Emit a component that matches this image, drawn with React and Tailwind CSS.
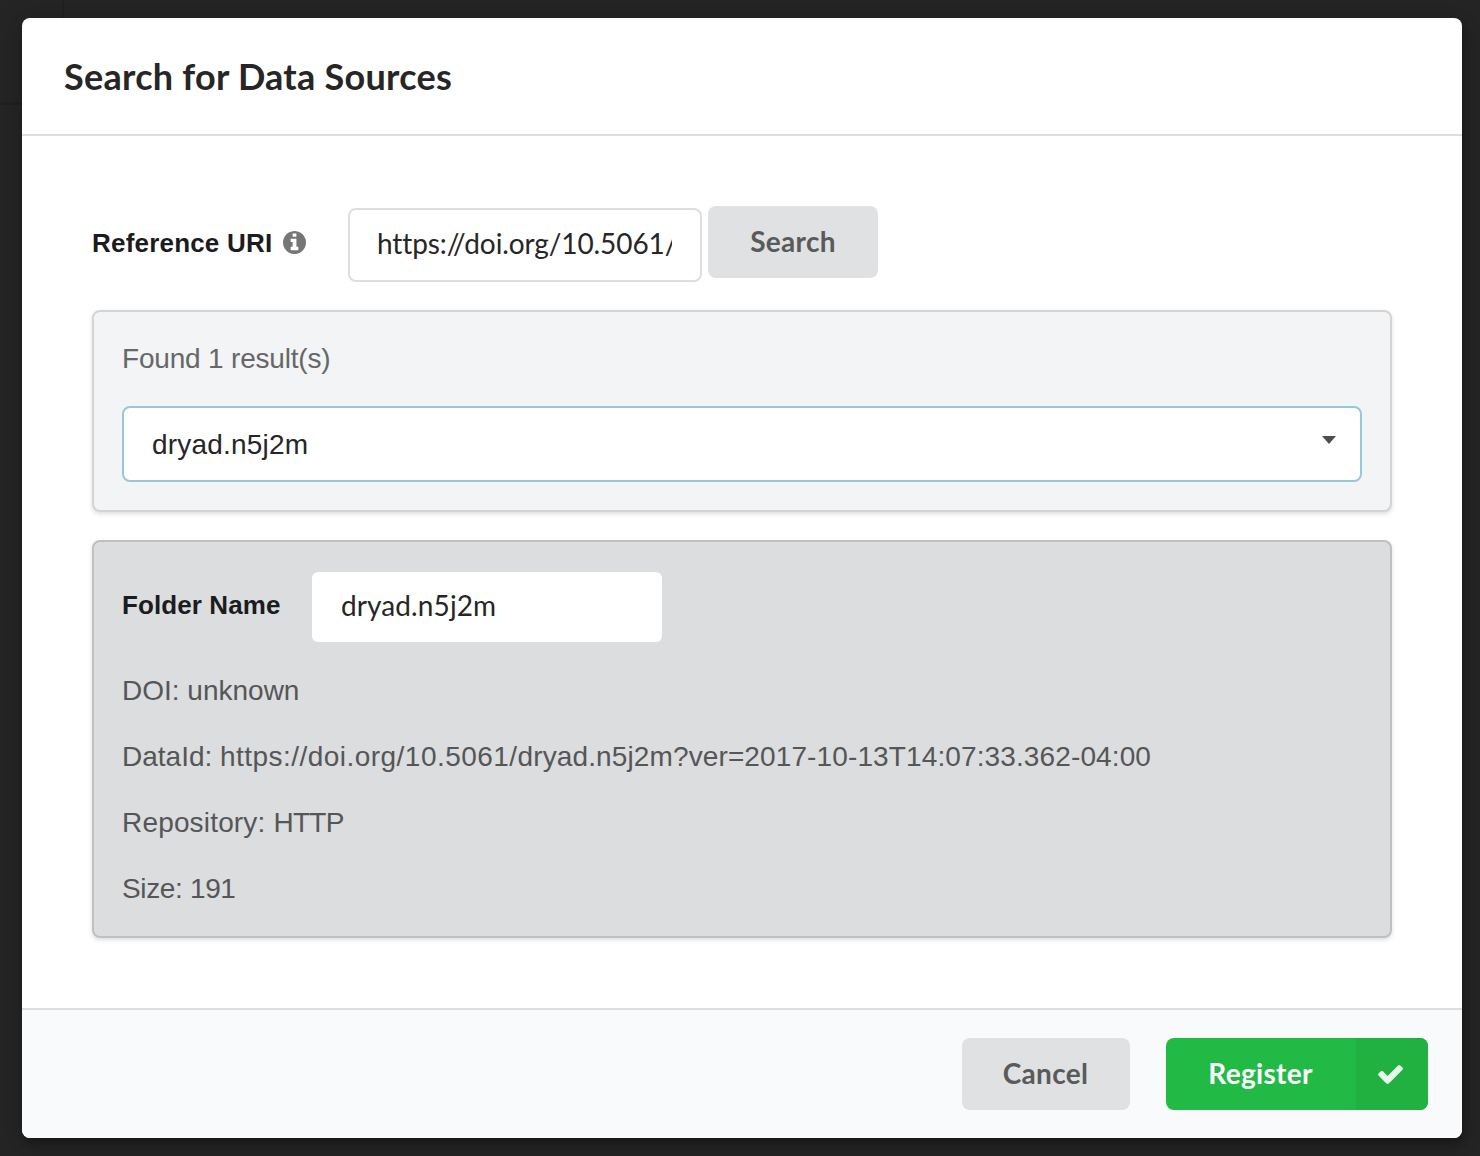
import React from "react";

const label = "font-['Liberation_Sans'] font-bold text-[26px] leading-[36px] whitespace-nowrap text-[#1b1c1d]";
const detail = "h-[66px] w-max text-[28px] leading-[36px] whitespace-nowrap";

function InfoIcon() {
  return (
    <svg className="mb-[1px] ml-[11px] h-[23px] w-[23px] shrink-0" viewBox="128 128 1536 1536" fill="#767676" aria-hidden="true">
      <path d="M1152 1376v-160q0-14-9-23t-23-9h-96v-512q0-14-9-23t-23-9h-320q-14 0-23 9t-9 23v160q0 14 9 23t23 9h96v320h-96q-14 0-23 9t-9 23v160q0 14 9 23t23 9h448q14 0 23-9t9-23zm-128-896v-160q0-14-9-23t-23-9h-192q-14 0-23 9t-9 23v160q0 14 9 23t23 9h192q14 0 23-9t9-23zm640 416q0 209-103 385.5t-279.5 279.5-385.5 103-385.5-103-279.5-279.5-103-385.5 103-385.5 279.5-279.5 385.5-103 385.5 103 279.5 279.5 103 385.5z" />
    </svg>
  );
}

function CheckIcon() {
  return (
    <svg className="mr-[3px] h-[19px] w-[25px]" viewBox="121 334 1550 1188" fill="#e9f8ec" aria-hidden="true">
      <path d="M1671 566q0 40-28 68l-724 724-136 136q-28 28-68 28t-68-28l-136-136-362-362q-28-28-28-68t28-68l136-136q28-28 68-28t68 28l294 295 656-657q28-28 68-28t68 28l136 136q28 28 28 68z" />
    </svg>
  );
}

export default function App() {
  return (
    <div className="relative h-[1156px] w-[1480px] overflow-hidden bg-[#252525] pl-[22px] pt-[18px] font-['Liberation_Sans',sans-serif] [font-variant-ligatures:none]">
      <div className="absolute left-[62px] top-0 h-[18px] w-[2px] bg-[#202020]" />
      <div className="absolute left-0 top-[102px] h-[3px] w-[22px] bg-[#202020]" />
      <div className="relative flex h-[1120px] w-[1440px] flex-col overflow-hidden rounded-[8px] bg-white shadow-[2px_6px_6px_rgba(0,0,0,0.2),2px_6px_30px_4px_rgba(0,0,0,0.2)]">
        <header className="flex h-[118px] shrink-0 items-center border-b-2 border-[#dededf] pl-[42px]">
          <h1 className="font-['Lato'] text-[36px] font-bold leading-[46px] tracking-[0.26px] text-[#262626]">Search for Data Sources</h1>
        </header>
        <main className="h-[872px] shrink-0 px-[70px] pt-[70px]">
          <div className="flex h-[104px] items-start">
            <div className="flex h-[74px] w-[256px] items-center">
              <span className={`${label} tracking-[0.2px]`}>Reference URI</span>
              <InfoIcon />
            </div>
            <div className="mt-[2px] h-[74px] w-[354px] rounded-[8px] border-2 border-[#dededf] px-[27px] pt-[15px]">
              <div className="w-[295px] overflow-hidden whitespace-nowrap font-['Lato'] text-[28px] leading-[36px] tracking-[-0.1px] text-[#262626]">https://doi.org/10.5061/</div>
            </div>
            <button className="ml-[6px] h-[72px] w-[170px] rounded-[8px] bg-[#e0e1e2] pb-[2px] font-['Lato'] text-[28px] font-bold tracking-[0.3px] text-[#5a5a5b]">Search</button>
          </div>
          <section className="h-[202px] rounded-[8px] border-2 border-[#d4d4d5] bg-[#f3f4f5] px-[28px] pt-[29px] shadow-[0_2px_4px_rgba(34,36,38,0.15)]">
            <div className="w-max text-[28px] leading-[36px] tracking-[-0.19px] text-[#666768]">Found 1 result(s)</div>
            <div className="mt-[29px] flex h-[76px] items-center justify-between rounded-[8px] border-2 border-[#96c8da] bg-white pl-[28px] pr-[24px]">
              <span className="mt-[2px] text-[28px] leading-[36px] tracking-[0.2px] text-[#262626]">dryad.n5j2m</span>
              <svg className="mb-[8px] h-[8px] w-[14px]" viewBox="0 0 14 8"><path d="M0 0h14L7 8z" fill="#4d4d4d" /></svg>
            </div>
          </section>
          <section className="mt-[28px] h-[398px] rounded-[8px] border-2 border-[#bfc0c1] bg-[#dcddde] px-[28px] pt-[30px] text-[#555657] shadow-[0_2px_4px_rgba(34,36,38,0.15)]">
            <div className="flex h-[101px] items-start">
              <div className="flex h-[66px] w-[190px] items-center"><span className={`${label} tracking-[0.1px]`}>Folder Name</span></div>
              <div className="flex h-[70px] w-[350px] items-center rounded-[6px] bg-white pb-[4px] pl-[29px] font-['Lato'] text-[28px] tracking-[0.1px] text-[#262626]">dryad.n5j2m</div>
            </div>
            <div className={detail}>DOI: unknown</div>
            <div className={detail}>DataId: <span className="tracking-[0.46px]">https://doi.org/10.5061/</span><span className="tracking-[0.12px]">dryad.n5j2m?ver=2017-10-13T14:07:33.362-04:00</span></div>
            <div className={detail}><span className="tracking-[0.17px]">Repository: </span><span className="tracking-[-0.7px]">HTTP</span></div>
            <div className={`${detail} tracking-[-0.35px]`}>Size: 191</div>
          </section>
        </main>
        <footer className="flex flex-1 justify-end border-t-2 border-[#dededf] bg-[#f9fafb] pr-[34px] pt-[28px] font-['Lato'] text-[28px] font-bold tracking-[0.3px]">
          <button className="h-[72px] w-[168px] rounded-[8px] bg-[#e0e1e2] pb-[2px] pr-[1px] text-[#5a5a5b]">Cancel</button>
          <button className="ml-[36px] flex h-[72px] w-[262px] overflow-hidden rounded-[8px] bg-[#21ba45] text-white">
            <span className="flex h-full w-[190px] items-center justify-center pb-[2px] pr-[1px]">Register</span>
            <span className="flex h-full w-[72px] items-center justify-center bg-[#20b141] pt-[1px]">
              <CheckIcon />
            </span>
          </button>
        </footer>
      </div>
    </div>
  );
}
